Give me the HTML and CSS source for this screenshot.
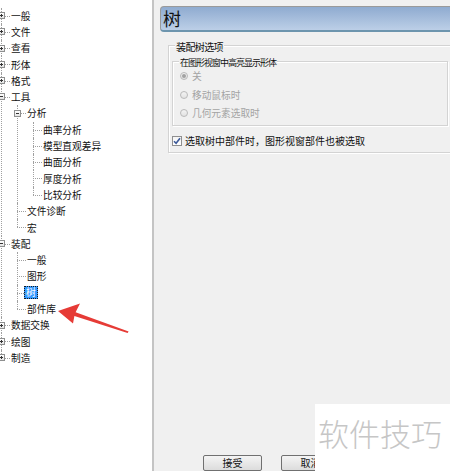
FILE: index.html
```html
<!DOCTYPE html>
<html lang="zh-CN">
<head>
<meta charset="utf-8">
<title>树</title>
<link rel="stylesheet" href="styles.css">
</head>
<body>
<div class="app">
  <aside class="tree">
    <ul class="lvl0">
      <li class="node"><div class="row"><span class="exp plus"></span><span class="lbl">一般</span></div></li>
      <li class="node"><div class="row"><span class="exp plus"></span><span class="lbl">文件</span></div></li>
      <li class="node"><div class="row"><span class="exp plus"></span><span class="lbl">查看</span></div></li>
      <li class="node"><div class="row"><span class="exp plus"></span><span class="lbl">形体</span></div></li>
      <li class="node"><div class="row"><span class="exp plus"></span><span class="lbl">格式</span></div></li>
      <li class="node"><div class="row"><span class="exp"></span><span class="lbl">工具</span></div>
        <ul class="sub">
          <li class="node"><div class="row"><span class="exp"></span><span class="lbl">分析</span></div>
            <ul class="sub">
              <li class="node"><div class="row"><span class="lbl">曲率分析</span></div></li>
              <li class="node"><div class="row"><span class="lbl">模型直观差异</span></div></li>
              <li class="node"><div class="row"><span class="lbl">曲面分析</span></div></li>
              <li class="node"><div class="row"><span class="lbl">厚度分析</span></div></li>
              <li class="node"><div class="row"><span class="lbl">比较分析</span></div></li>
            </ul>
          </li>
          <li class="node"><div class="row"><span class="lbl">文件诊断</span></div></li>
          <li class="node"><div class="row"><span class="lbl">宏</span></div></li>
        </ul>
      </li>
      <li class="node"><div class="row"><span class="exp"></span><span class="lbl">装配</span></div>
        <ul class="sub">
          <li class="node"><div class="row"><span class="lbl">一般</span></div></li>
          <li class="node"><div class="row"><span class="lbl">图形</span></div></li>
          <li class="node"><div class="row"><span class="lbl sel">树</span></div></li>
          <li class="node"><div class="row"><span class="lbl">部件库</span></div></li>
        </ul>
      </li>
      <li class="node"><div class="row"><span class="exp plus"></span><span class="lbl">数据交换</span></div></li>
      <li class="node"><div class="row"><span class="exp plus"></span><span class="lbl">绘图</span></div></li>
      <li class="node"><div class="row"><span class="exp plus"></span><span class="lbl">制造</span></div></li>
    </ul>
  </aside>

  <main class="main">
    <div class="header">树</div>

    <div class="group outer">
      <div class="group-title">装配树选项</div>
      <div class="group inner">
        <div class="group-title">在图形视窗中高亮显示形体</div>
        <div class="radios">
          <div class="radio-row"><span class="radio on"></span><span class="rtext">关</span></div>
          <div class="radio-row"><span class="radio"></span><span class="rtext">移动鼠标时</span></div>
          <div class="radio-row"><span class="radio"></span><span class="rtext">几何元素选取时</span></div>
        </div>
      </div>
      <div class="check-row">
        <span class="check"><svg width="8" height="8" viewBox="0 0 8 8"><path d="M1 4.2 L3.1 6.3 L7 1.2" fill="none" stroke="#3d5a99" stroke-width="1.6"/></svg></span>
        <span class="ctext">选取树中部件时，图形视窗部件也被选取</span>
      </div>
    </div>

    <div class="buttons">
      <button class="btn">接受</button>
      <button class="btn">取消</button>
    </div>
  </main>
</div>

<svg class="arrow" width="450" height="471" viewBox="0 0 450 471">
  <polygon points="58,311 80,303.5 75.6,312.3 128.6,331.4 127.6,333 74.4,316 73,323.5" fill="#e63b36"/>
</svg>

<div class="watermark">软件技巧</div>
</body>
</html>
```

FILE: styles.css
```css
html, body {
  margin: 0;
  padding: 0;
  width: 450px;
  height: 471px;
  overflow: hidden;
  background: #f0f0f0;
  font-family: "Noto Sans CJK SC", "Noto Sans", sans-serif;
  font-size: 10px;
  color: #111;
}

.app {
  display: flex;
  height: 471px;
}

/* ---------- tree ---------- */
.tree {
  box-sizing: border-box;
  width: 154px;
  flex: none;
  background: #fff;
  border-right: 2px solid #c4c4c4;
  padding-top: 7.5px;
  overflow: hidden;
}

.tree ul {
  list-style: none;
  margin: 0;
  padding: 0;
}

.tree .lvl0 { margin-left: 1px; }
.tree .sub { margin-left: 6px; }

.node {
  position: relative;
  padding-left: 10px;
}

.node::before {
  content: "";
  position: absolute;
  left: 0;
  top: 0;
  bottom: 0;
  border-left: 1px dotted #a0a0a0;
}

.node:last-child::before {
  bottom: auto;
  height: 8px;
}

.row {
  position: relative;
  height: 16.3px;
  display: flex;
  align-items: center;
}

.row::before {
  content: "";
  position: absolute;
  left: -10px;
  top: 8px;
  width: 9px;
  border-top: 1px dotted #a0a0a0;
}

.exp {
  position: absolute;
  left: -13px;
  top: 4.5px;
  box-sizing: border-box;
  width: 7px;
  height: 7px;
  border: 1px solid #8e8f8f;
  background: linear-gradient(#ffffff, #e4e4e4);
  z-index: 1;
}

.exp::before {
  content: "";
  position: absolute;
  left: 1px;
  top: 2px;
  width: 3px;
  height: 1px;
  background: #333;
}

.exp.plus::after {
  content: "";
  position: absolute;
  left: 2px;
  top: 1px;
  width: 1px;
  height: 3px;
  background: #333;
}

.lbl {
  font-size: 9.7px;
  line-height: 12px;
  white-space: nowrap;
  color: #111;
}

.lbl.sel {
  margin-left: -3px;
  padding: 0 2px;
  line-height: 13px;
  background: #3399ff;
  color: #fff;
  outline: 1px dotted #1a1a1a;
  outline-offset: -1px;
}

/* ---------- main ---------- */
.main {
  flex: 1;
  display: flex;
  flex-direction: column;
  overflow: hidden;
  background: #f0f0f0;
}

.header {
  box-sizing: border-box;
  height: 26px;
  margin: 6px -8px 0 6px;
  padding-left: 2px;
  border: 1px solid #9a9a9a;
  border-bottom: 2px solid #6d95ae;
  border-radius: 4px 0 0 4px;
  background: linear-gradient(#8fabd0, #bccfe7);
  font-size: 18px;
  line-height: 22px;
  color: #111;
}

.group {
  border: 1px solid #d3d3d3;
  box-shadow: inset 1px 1px 0 #fff, 1px 1px 0 #fff;
}

.group-title {
  width: max-content;
  padding: 0 1px;
  background: #f0f0f0;
  line-height: 12px;
  color: #111;
}

.outer {
  margin: 13px -20px 0 14px;
  padding-bottom: 3px;
}

.outer > .group-title {
  margin: -5px 0 0 6px;
  letter-spacing: -0.6px;
}

.inner {
  margin: 8px 21px 0 3px;
  padding-bottom: 2px;
}

.inner > .group-title {
  margin: -4.5px 0 0 6px;
  font-size: 9px;
  line-height: 10px;
  letter-spacing: -1px;
}

.radios {
  margin-top: -0.5px;
}

.radio-row {
  height: 18.5px;
  display: flex;
  align-items: center;
  padding-left: 7px;
}

.radio {
  box-sizing: border-box;
  width: 8px;
  height: 8px;
  border: 1px solid #b9b9b9;
  border-radius: 50%;
  background: linear-gradient(#f3f3f3, #e2e2e2);
  display: flex;
  align-items: center;
  justify-content: center;
}

.radio.on::after {
  content: "";
  width: 4px;
  height: 4px;
  border-radius: 50%;
  background: #a2a2a2;
}

.rtext {
  margin-left: 4px;
  font-size: 9.7px;
  color: #a3a3a3;
  line-height: 12px;
}

.check-row {
  height: 16px;
  margin: 7px 0 0 3px;
  display: flex;
  align-items: center;
}

.check {
  box-sizing: border-box;
  width: 10px;
  height: 10px;
  border: 1px solid #8f8f8f;
  background: linear-gradient(#f4f4f4, #ffffff);
  display: flex;
  align-items: center;
  justify-content: center;
}

.ctext {
  margin-left: 3px;
  line-height: 12px;
}

.buttons {
  margin-top: auto;
  display: flex;
  gap: 19px;
  padding-left: 49px;
}

.btn {
  box-sizing: border-box;
  width: 59px;
  height: 16px;
  padding: 0;
  border: 1px solid #707070;
  border-radius: 2px;
  background: linear-gradient(#f4f4f4, #dcdcdc);
  font-family: "Noto Sans CJK SC", sans-serif;
  font-size: 10px;
  line-height: 14px;
  color: #111;
}

/* ---------- overlays ---------- */
.arrow {
  position: absolute;
  left: 0;
  top: 0;
  pointer-events: none;
}

.watermark {
  position: absolute;
  left: 315px;
  top: 404px;
  right: 0;
  bottom: 0;
  background: #fff;
  color: #c6c6c6;
  font-size: 31px;
  font-weight: 300;
  line-height: 58px;
  padding-left: 3px;
}
```
